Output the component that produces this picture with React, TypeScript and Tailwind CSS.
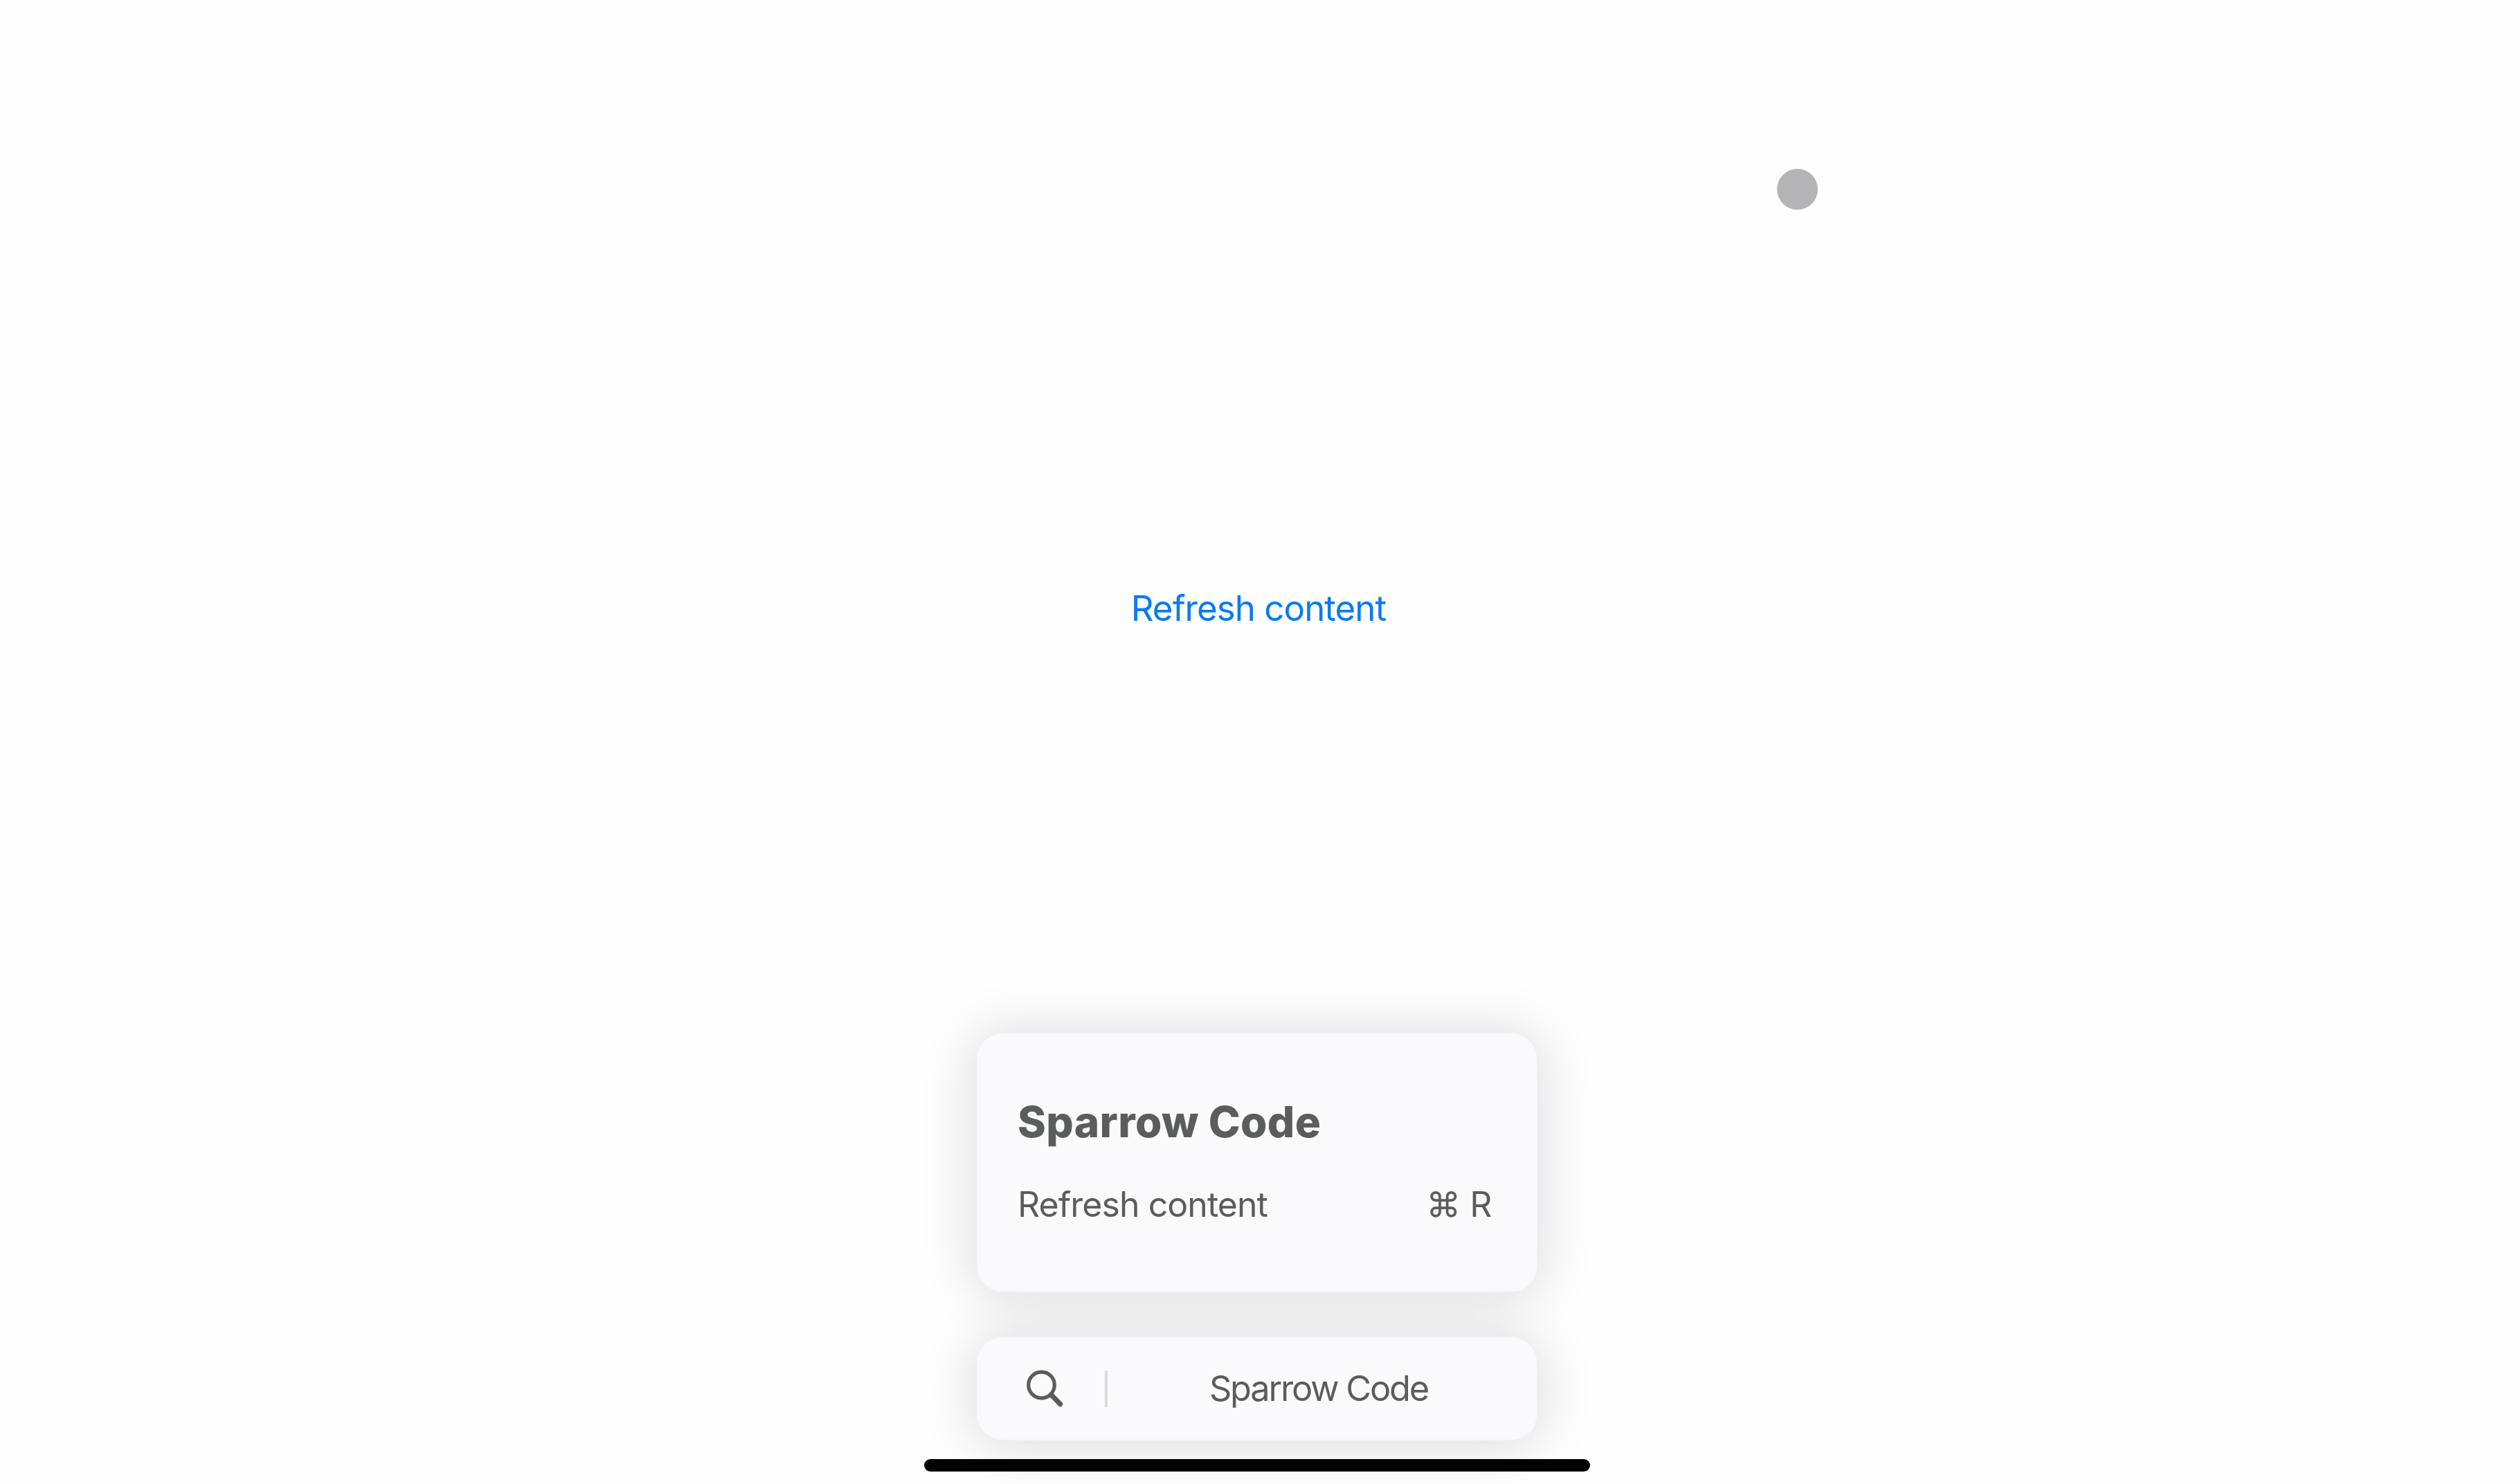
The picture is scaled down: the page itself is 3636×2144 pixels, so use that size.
import React from 'react';

interface CardProps {
  className: string;
  children: React.ReactNode;
}

const Card: React.FC<CardProps> = ({ className, children }) => (
  <div
    className={`w-[812px] rounded-[38px] border-2 border-[#f0eff2] bg-[#faf9fc] text-[#5b5c5e] shadow-[0_3px_80px_rgba(20,10,30,0.155)] ${className}`}
  >
    {children}
  </div>
);

const SearchIcon: React.FC = () => (
  <svg className="size-[60px]" viewBox="0 0 60 60" fill="none" stroke="currentColor" aria-hidden="true">
    <circle cx="25.5" cy="25" r="18.8" strokeWidth="5.2" />
    <path d="M39.5 39 52.5 52.5" strokeWidth="7.4" strokeLinecap="round" />
  </svg>
);

const App: React.FC = () => {
  return (
    <div
      className="relative flex h-[2144px] w-[3636px] flex-col items-center overflow-hidden bg-[#fefefe] pr-1"
      style={{ fontFamily: 'Inter, "Liberation Sans", sans-serif' }}
    >
      {/* Pointer */}
      <div className="absolute left-[2567px] top-[244px] size-[59px] rounded-full bg-[#b4b3b6]" />

      {/* Page content */}
      <main className="flex h-[1491px] w-full justify-center pt-[849px] pl-1">
        <button className="h-[60px] whitespace-nowrap text-[51px] leading-[60px] tracking-[-0.95px] text-[#0a7af5]">
          Refresh content
        </button>
      </main>

      {/* Shortcut list */}
      <Card className="h-[377px] pl-[58px] pr-[65px] pt-[78px]">
        <h1 className="text-[62px] leading-[100px] font-extrabold tracking-[0.35px]">Sparrow Code</h1>
        <div className="mt-[39px] flex items-center justify-between text-[50px] leading-[60px]">
          <span className="tracking-[-0.95px]">Refresh content</span>
          <span className="tracking-[-0.5px]">⌘ R</span>
        </div>
      </Card>

      {/* Search bar */}
      <Card className="mt-[62px] flex h-[152px] items-center pl-[67px]">
        <SearchIcon />
        <div className="ml-[57px] h-[53px] w-1 bg-[#dadbdd]" />
        <div className="flex flex-1 justify-center pr-[10px] text-[50.5px] leading-[60px] tracking-[-2.2px]">
          Sparrow Code
        </div>
      </Card>

      {/* Home indicator */}
      <div className="mt-[26px] h-[18px] w-[962px] rounded-full bg-black" />
    </div>
  );
};

export default App;
